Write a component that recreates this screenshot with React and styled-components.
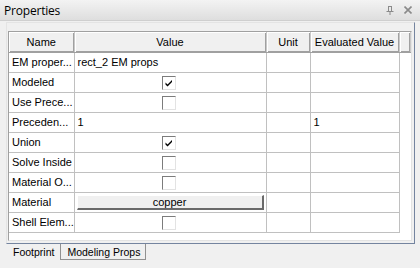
import React from "react"
import styled, { createGlobalStyle } from "styled-components"

let Global = createGlobalStyle`
    html, body {
        margin: 0;
        padding: 0;
        background: #f0f0f0;
    }
    body {
        font-family: "Liberation Sans", Arial, sans-serif;
        font-size: 11px;
        color: #000;
    }
`
let Window = styled.div`
    width: 420px;
    height: 268px;
    background: #f0f0f0;
    display: flex;
    flex-direction: column;
    overflow: hidden;
`
let TitleBar = styled.div`
    height: 21px;
    box-sizing: border-box;
    display: flex;
    align-items: center;
    padding: 0 8px 0 4px;
    background: linear-gradient(#f3f3f3, #dedede);
    border-bottom: 1px solid #cfcfcf;
`
let Title = styled.div`
    flex: 1;
    font-family: "Open Sans", "Noto Sans", sans-serif;
    font-size: 12px;
    letter-spacing: -0.2px;
    color: #000;
`
let TitleIcons = styled.div`
    display: flex;
    gap: 10px;
    align-items: center;
`
let Panel = styled.div`
    margin: 1px 5px 0 6px;
    height: 222px;
    box-sizing: border-box;
    border-top: 1px solid #e4e4e4;
    border-left: 1px solid #e4e4e4;
    border-right: 1px solid #74849f;
    border-bottom: 1px solid #74849f;
    padding: 8px 2px 2px 1px;
    display: flex;
`
let GridBox = styled.div`
    flex: 1;
    background: #fff;
    border-top: 1px solid #a0a0a0;
    border-left: 1px solid #a0a0a0;
    border-right: 1px solid #e3e3e3;
    border-bottom: 1px solid #e3e3e3;
`
let Table = styled.table`
    border-collapse: collapse;
    table-layout: fixed;
    width: 390px;
    font-size: 11px;
`
let Head = styled.th`
    height: 20px;
    padding: 0;
    font-weight: normal;
    text-align: center;
    background: #f0f0f0;
    box-shadow: inset 1px 1px 0 #fff, inset -1px -1px 0 #a0a0a0;
    border-right: 1px solid #c8c8c8;
    border-bottom: 1px solid #a0a0a0;
    white-space: nowrap;
    overflow: hidden;
`
let Cell = styled.td`
    height: 19px;
    padding: 0 3px;
    border-right: 1px solid #c0c0c0;
    border-bottom: 1px solid #c0c0c0;
    text-align: ${p => (p.center ? "center" : "left")};
    white-space: nowrap;
    overflow: hidden;
    vertical-align: middle;
    line-height: 13px;
`
let Check = styled.span`
    display: inline-block;
    width: 14px;
    height: 14px;
    box-sizing: border-box;
    background: #fff;
    border-top: 1px solid #7c7c7c;
    border-left: 1px solid #7c7c7c;
    border-right: 1px solid #e3e3e3;
    border-bottom: 1px solid #e3e3e3;
    vertical-align: middle;
    position: relative;
    left: -1px;
    svg {
        display: block;
    }
`
let Button = styled.div`
    height: 15px;
    margin: 0 -1px;
    box-sizing: border-box;
    background: #f0f0f0;
    border-top: 1px solid #fff;
    border-left: 1px solid #fff;
    border-right: 2px solid #6a6a6a;
    border-bottom: 2px solid #6a6a6a;
    text-align: center;
    line-height: 12px;
`
let Tabs = styled.div`
    display: flex;
    margin-left: 6px;
    height: 17px;
`
let Tab = styled.div`
    padding: 1px 5px 0 6px;
    box-sizing: border-box;
    height: ${p => (p.active ? "18px" : "16px")};
    line-height: 14px;
    font-size: 10.5px;
    border: 1px solid ${p => (p.active ? "transparent" : "#919191")};
    border-top: none;
`

let rows = [
    { name: "EM proper...", value: "rect_2 EM props" },
    { name: "Modeled", check: true },
    { name: "Use Prece...", check: false },
    { name: "Preceden...", value: "1", evaluated: "1" },
    { name: "Union", check: true },
    { name: "Solve Inside", check: false },
    { name: "Material O...", check: false },
    { name: "Material", button: "copper" },
    { name: "Shell Elem...", check: false },
]

function CheckBox({ checked }) {
    return (
        <Check>
            {checked && (
                <svg width="12" height="12" viewBox="0 0 12 12">
                    <path d="M2.5 5.5 L4.5 7.5 L9 3 L9 5 L4.5 9.5 L2.5 7.5 Z" fill="#000" />
                </svg>
            )}
        </Check>
    )
}

function ValueCell({ row }) {
    if (row.button) {
        return (
            <Cell>
                <Button>{row.button}</Button>
            </Cell>
        )
    }
    if (row.check !== undefined) {
        return (
            <Cell center>
                <CheckBox checked={row.check} />
            </Cell>
        )
    }
    return <Cell>{row.value}</Cell>
}

export default function App() {
    return (
        <Window>
            <Global />
            <TitleBar>
                <Title>Properties</Title>
                <TitleIcons>
                    <svg width="8" height="9" viewBox="0 0 8 9">
                        <path d="M2 0.5 H6 M2.5 0.5 V5 M5.5 0.5 V5 M0.5 5.5 H7.5 M4 5.5 V9" stroke="#8a8a8a" strokeWidth="1" fill="none" />
                    </svg>
                    <svg width="8" height="8" viewBox="0 0 8 8">
                        <path d="M0.5 0.5 L7.5 7.5 M7.5 0.5 L0.5 7.5" stroke="#8a8a8a" strokeWidth="1.6" />
                    </svg>
                </TitleIcons>
            </TitleBar>
            <Panel>
                <GridBox>
                    <Table>
                        <colgroup>
                            <col style={{ width: 65 }} />
                            <col style={{ width: 192 }} />
                            <col style={{ width: 44 }} />
                            <col style={{ width: 89 }} />
                            <col style={{ width: 11 }} />
                        </colgroup>
                        <thead>
                            <tr>
                                <Head>Name</Head>
                                <Head>Value</Head>
                                <Head>Unit</Head>
                                <Head>Evaluated Value</Head>
                                <Head />
                            </tr>
                        </thead>
                        <tbody>
                            {rows.map(row => (
                                <tr key={row.name}>
                                    <Cell>{row.name}</Cell>
                                    <ValueCell row={row} />
                                    <Cell />
                                    <Cell>{row.evaluated}</Cell>
                                </tr>
                            ))}
                        </tbody>
                    </Table>
                </GridBox>
            </Panel>
            <Tabs>
                <Tab active>Footprint</Tab>
                <Tab>Modeling Props</Tab>
            </Tabs>
        </Window>
    )
}
